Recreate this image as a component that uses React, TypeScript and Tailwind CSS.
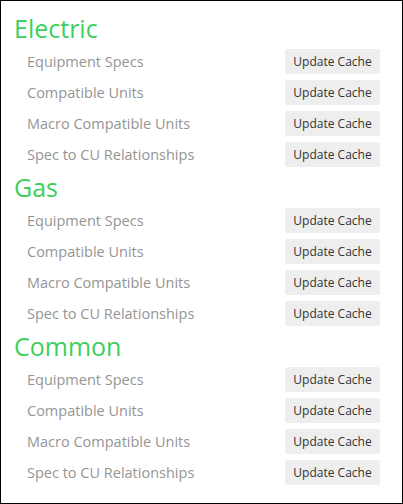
const sections = ["Electric", "Gas", "Common"];
const items = [
  "Equipment Specs",
  "Compatible Units",
  "Macro Compatible Units",
  "Spec to CU Relationships",
];

export default function App() {
  return (
    <div className="w-[403px] h-[504px] border border-black bg-white pt-[10px] pl-[13px] pr-[22px] font-['Open_Sans',sans-serif]">
      {sections.map((s) => (
        <div key={s}>
          <h2 className="text-[25px] leading-[35px] text-[#3ecf5c]">{s}</h2>
          {items.map((item) => (
            <div key={item} className="flex items-center justify-between h-[31px] pl-[13px]">
              <span className="text-[14.5px] text-[#959595]">{item}</span>
              <button className="h-[25px] w-[95px] rounded-[3px] bg-[#eeeeee] text-[12px] text-[#333]">
                Update Cache
              </button>
            </div>
          ))}
        </div>
      ))}
    </div>
  );
}
